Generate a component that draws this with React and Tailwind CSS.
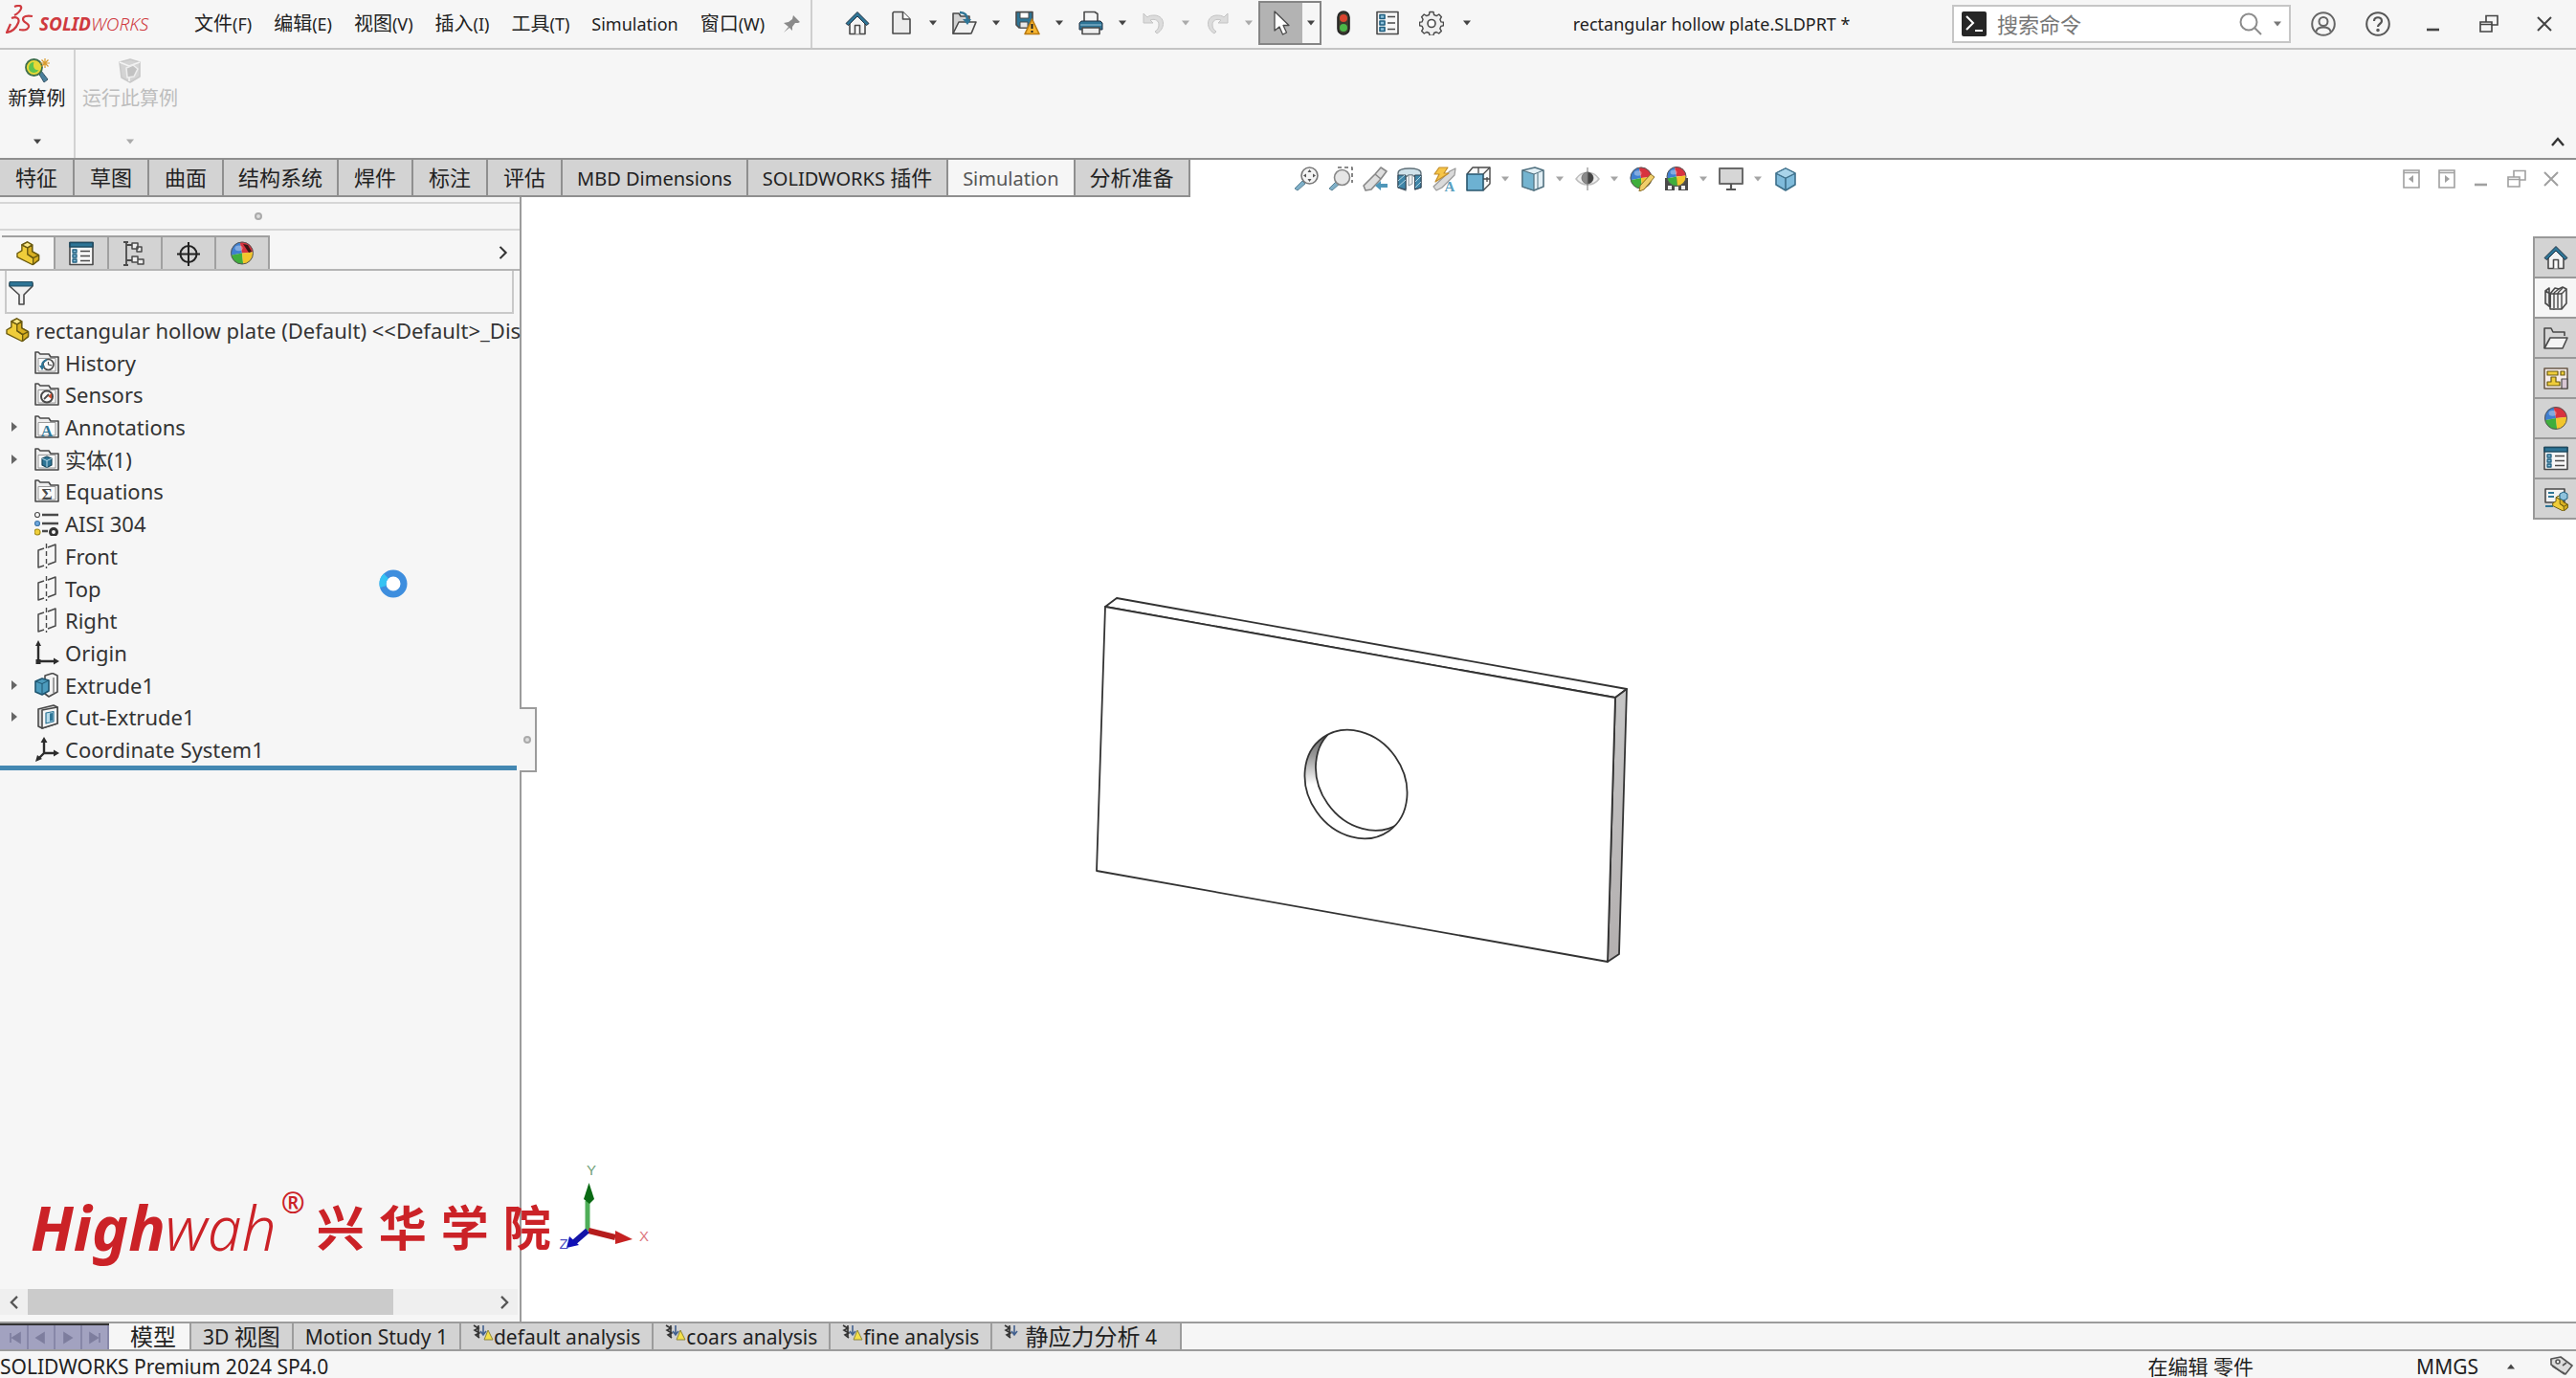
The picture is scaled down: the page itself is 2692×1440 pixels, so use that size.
import React, { useState } from "react";

const MENUS = [
  { zh: "文件", en: "(F)" },
  { zh: "编辑", en: "(E)" },
  { zh: "视图", en: "(V)" },
  { zh: "插入", en: "(I)" },
  { zh: "工具", en: "(T)" },
  { zh: "", en: "Simulation" },
  { zh: "窗口", en: "(W)" },
];

const RIBBON_TABS = [
  { zh: "特征" },
  { zh: "草图" },
  { zh: "曲面" },
  { zh: "结构系统" },
  { zh: "焊件" },
  { zh: "标注" },
  { zh: "评估" },
  { en: "MBD Dimensions" },
  { en: "SOLIDWORKS ", zh: "插件" },
  { en: "Simulation" },
  { zh: "分析准备" },
];

const TREE = [
  { label: "History", icon: "history" },
  { label: "Sensors", icon: "sensors" },
  { label: "Annotations", icon: "annotations", arrow: true },
  { label: "实体(1)", icon: "bodies", arrow: true },
  { label: "Equations", icon: "equations" },
  { label: "AISI 304", icon: "material" },
  { label: "Front", icon: "plane" },
  { label: "Top", icon: "plane" },
  { label: "Right", icon: "plane" },
  { label: "Origin", icon: "origin" },
  { label: "Extrude1", icon: "extrude", arrow: true },
  { label: "Cut-Extrude1", icon: "cut", arrow: true },
  { label: "Coordinate System1", icon: "csys" },
];

const INK = "#4a4a4a";
const BLUE = "#2e7596";

function Svg({ children, className = "h-[26px] w-[26px]" }) {
  return (
    <svg viewBox="0 0 26 26" className={`${className} shrink-0`} fill="none" stroke={INK} strokeWidth="1.6" strokeLinejoin="round" aria-hidden="true">
      {children}
    </svg>
  );
}

function Caret({ className = "text-[#444]" }) {
  return (
    <svg viewBox="0 0 8 6" className={`h-[6px] w-[8px] shrink-0 ${className}`} aria-hidden="true"><path d="M0 .5h8L4 5.5z" fill="currentColor" /></svg>
  );
}

function Ball({ cx = 13, cy = 13, r = 11.5 }) {
  return (
    <g stroke="none">
      <path d={`M${cx} ${cy}L${cx - r * 0.2} ${cy - r}A${r} ${r} 0 0 0 ${cx - r} ${cy + r * 0.2}z`} fill="#3f7fd0" />
      <path d={`M${cx} ${cy}L${cx - r * 0.2} ${cy - r}A${r} ${r} 0 0 1 ${cx + r} ${cy - r * 0.1}z`} fill="#d8333f" />
      <path d={`M${cx} ${cy}L${cx - r} ${cy + r * 0.2}A${r} ${r} 0 0 0 ${cx + r * 0.1} ${cy + r}z`} fill="#3fae3c" />
      <path d={`M${cx} ${cy}L${cx + r} ${cy - r * 0.1}A${r} ${r} 0 0 1 ${cx + r * 0.1} ${cy + r}z`} fill="#f2c62c" />
      <circle cx={cx} cy={cy} r={r} stroke="#555" strokeWidth="1" fill="none" />
      <ellipse cx={cx - r * 0.3} cy={cy - r * 0.45} rx={r * 0.35} ry={r * 0.25} fill="#fff" opacity=".35" />
    </g>
  );
}

function Part({ x = 0, y = 0, s = 1 }) {
  return (
    <g transform={`translate(${x} ${y}) scale(${s})`} stroke="#6a5a10" strokeWidth="1.4">
      <path d="M1 13l5-3V4l6-3 5 3v7l7 4v5l-7 5L1 17z" fill="#f0cd3a" />
      <path d="M6 4l6 3v7l6 4v7l6-5v-5l-7-4V4l-5 3" fill="#d9b021" />
      <path d="M6 4l6 3 5-3-5-3z" fill="#fbe88a" />
      <path d="M12 14l6 4 6-3" />
    </g>
  );
}

const Home = () => (
  <Svg>
    <path d="M5 12v12.500h16V12l-8-8z" fill="#f4f4f4" />
    <path d="M10.500 24.500v-9h5v9" fill="#fff" />
    <path d="M1 13.500L13 1.500l12 12-2.500 2L13 6 3.500 15.500z" fill={BLUE} stroke="#234" strokeWidth="1" />
  </Svg>
);
const NewDoc = () => (
  <Svg>
    <path d="M5 1.500h9.500L22 9v15H4V2.500z" fill="#ececec" />
    <path d="M14.500 1.500V9H22" fill="#fff" />
  </Svg>
);
const OpenDoc = () => (
  <Svg>
    <path d="M1 24V3h6l2 3h9v18z" fill="#d2d2d2" />
    <path d="M1 24l6-12h18l-5 12z" fill="#f1f1f1" />
    <path d="M8 2c6 0 8 3 8 9" stroke={BLUE} strokeWidth="2.600" />
    <path d="M11 9h9l-4 6z" fill={BLUE} stroke="none" />
  </Svg>
);
const SaveWarn = () => (
  <Svg>
    <path d="M1 1.500h17V18H4l-3-3z" fill={BLUE} />
    <path d="M5 2h9v6H5z" fill="#fff" strokeWidth="1" />
    <path d="M5 12h8v6H5z" fill="#e8e8e8" strokeWidth="1" />
    <path d="M17.500 9L25 24.500H10z" fill="#f7b52f" stroke="#b87a12" />
    <path d="M17.500 14v5M17.500 21v2" stroke="#222" strokeWidth="2" />
  </Svg>
);
const Print = () => (
  <Svg>
    <path d="M6 12V1.500h11l3 2V12z" fill="#f5f5f5" />
    <path d="M1 13l2-2h20l2 2v7H1z" fill={BLUE} stroke="#234" strokeWidth="1" />
    <path d="M4 18h18v6.500H4z" fill="#eee" />
    <path d="M2 15h22" stroke="#9cc6da" strokeWidth="1" />
  </Svg>
);
const Undo = () => (
  <Svg>
    <path d="M2 3v10h10L9 10c6-2 9 1 9 5 0 3-1 5-4 7l2 2c9-5 9-18-2-19-3 0-6 0-8 2z" fill="#dcdcdc" stroke="#c4c4c4" strokeWidth="1" />
  </Svg>
);
const Redo = () => (
  <Svg>
    <path d="M24 3v10H14l3-3c-6-2-9 1-9 5 0 3 1 5 4 7l-2 2C1 19 1 6 12 5c3 0 6 0 8 2z" fill="#dcdcdc" stroke="#c4c4c4" strokeWidth="1" />
  </Svg>
);
const Pointer = () => (
  <Svg>
    <path d="M6 1v20l5-4 3.500 8 4-2-3.500-7.500h6z" fill="#fff" strokeWidth="1.300" />
  </Svg>
);
const Traffic = () => (
  <Svg>
    <rect x="7" y="1" width="12" height="24" rx="6" fill="#3b3b2e" stroke="#222" />
    <circle cx="13" cy="8" r="4" fill="#d9442f" stroke="none" />
    <circle cx="13" cy="18" r="4" fill="#4cb648" stroke="none" />
  </Svg>
);
const OptionList = () => (
  <Svg>
    <path d="M2 1.500h22v23H2z" fill="#f6f6f6" />
    <path d="M5 4.500h5v4H5zM5 11h5v4H5zM5 17.500h5v4H5z" fill="#8ec2dc" stroke="#1e5f80" />
    <path d="M13 6.500h8M13 13h8M13 19.500h8" />
  </Svg>
);
const Gear = () => (
  <Svg>
    <path d="M11 1.500h4l.6 3 2.600 1.100L20.800 4l2.600 2.700-1.500 2.600 1.100 2.600 2.500.3v3.600l-2.700.6-1 2.500 1.500 2.500-2.600 2.600-2.600-1.500-2.500 1-.6 2.600h-4l-.6-2.600-2.500-1-2.600 1.500-2.600-2.600 1.500-2.500-1-2.500-2.700-.6v-3.600l2.500-.3 1.100-2.600-1.500-2.600L5.200 4l2.600 1.600 2.600-1.100z" fill="#f0f0f0" strokeWidth="1.400" />
    <circle cx="13" cy="13.500" r="4" fill="#fff" />
  </Svg>
);
const PropList = () => (
  <Svg>
    <path d="M1 1.500h24v23H1z" fill="#f7f7f7" />
    <path d="M1 1.500h24v4.500H1z" fill={BLUE} stroke="#1e4c63" />
    <path d="M4 9h4v3H4zM4 14h4v3H4zM4 19h4v3H4z" fill="#8ec2dc" stroke="#1e5f80" strokeWidth="1.300" />
    <path d="M12 10.500h10M12 15.500h10M12 20.500h10" />
  </Svg>
);

/* feature tree icons */
function Folder({ children }) {
  return (
    <Svg>
      <path d="M1 24V2h3l2 2h9l2 3h8v17z" fill="#ededed" />
      <path d="M4 8.500h18V22H4z" fill="#fafafa" stroke="#9a9a9a" strokeWidth="1" />
      {children}
    </Svg>
  );
}

const TREE_ICONS = {
  history: (
    <Folder>
      <circle cx="14.500" cy="15" r="5.500" />
      <path d="M14.500 12v3l4 1" strokeWidth="1.200" />
      <path d="M5 16h6l-3 5z" fill={BLUE} stroke="none" />
      <path d="M8 16c0-3 2-5 5-6" stroke={BLUE} strokeWidth="2" />
    </Folder>
  ),
  sensors: (
    <Folder>
      <circle cx="13" cy="15.500" r="6" strokeWidth="2" />
      <path d="M14 15l4-3v6z" fill="#d2502f" stroke="none" />
      <path d="M10 18l5-5" strokeWidth="1.800" />
    </Folder>
  ),
  annotations: (
    <Folder>
      <text x="13" y="22.500" textAnchor="middle" fontSize="17" fontWeight="700" fontFamily="Liberation Serif, serif" fill={BLUE} stroke="none">A</text>
    </Folder>
  ),
  bodies: (
    <Folder>
      <path d="M8 12l5-2 5 2v7l-5 2.500L8 19z" fill={BLUE} stroke="#17465c" strokeWidth="1.200" />
      <path d="M8 12l5 2.500 5-2.500M13 14.500v7" stroke="#b9dcea" strokeWidth="1" />
    </Folder>
  ),
  equations: (
    <Folder>
      <text x="13" y="22" textAnchor="middle" fontSize="17" fontWeight="700" fontFamily="Liberation Serif, serif" fill={INK} stroke="none">Σ</text>
    </Folder>
  ),
  material: (
    <Svg>
      <circle cx="3" cy="4" r="2.500" fill="#fff" strokeWidth="1.200" />
      <circle cx="3" cy="13" r="2.500" fill="#6fa9e0" stroke="#3f76a8" strokeWidth="1.200" />
      <circle cx="3" cy="22" r="3" fill="#f0cf3a" stroke="#a08a1a" strokeWidth="1.200" />
      <path d="M8 4h17M8 13h17M8 21h6" strokeWidth="2.400" />
      <circle cx="20" cy="22" r="3.500" strokeWidth="3" stroke="#333" />
    </Svg>
  ),
  plane: (
    <Svg>
      <path d="M10 5L4 7v18l6-2M14 4l8-3v18l-8 3" strokeWidth="1.500" />
      <path d="M12.500 0v26" strokeDasharray="5 3" strokeWidth="1.400" />
    </Svg>
  ),
  origin: (
    <Svg>
      <path d="M4 4v18h17" stroke="#2c2c2c" strokeWidth="2.400" />
      <path d="M1 6l3-6 3 6zM20 18.500l6 3.500-6 3.500zM1.500 20h5v5h-5z" fill="#2c2c2c" stroke="none" />
    </Svg>
  ),
  extrude: (
    <Svg>
      <path d="M11 3l8-2.500 5 2.500v17l-9 5-4-3z" fill="#f2f2f2" />
      <path d="M20 5v16" strokeWidth="1" />
      <path d="M1 9l7-3 7 2v11l-7 4-7-3z" fill="#4c9bbd" stroke="#1e5570" />
      <path d="M1 9l7 2.500L15 8M8 11.500V23" stroke="#1e5570" strokeWidth="1" />
    </Svg>
  ),
  cut: (
    <Svg>
      <path d="M4 5l16-4 4 2v17l-16 5-4-2z" fill="#d8d8d8" />
      <path d="M8 6l16-3v17L8 25z" fill="#f6f6f6" />
      <path d="M12 9l8-1.500V18l-8 2z" fill="#b9dcea" stroke={BLUE} strokeWidth="1.200" />
      <path d="M16 9.500l3-.6v8l-3 .8z" fill={BLUE} stroke="none" />
    </Svg>
  ),
  csys: (
    <Svg>
      <path d="M10 4v13h12M10 17l-6 6" stroke="#2c2c2c" strokeWidth="2.400" />
      <path d="M6.500 6L10 0l3.500 6zM20 13.500l6 3.500-6 3.500zM1 26l2-7 5 4z" fill="#2c2c2c" stroke="none" />
    </Svg>
  ),
};

/* heads-up view toolbar icons */
const Glass = () => (
  <g>
    <path d="M1 23l8-8 3 3-8 7z" fill="#7fb0c8" stroke="#5a8296" strokeWidth="1" />
  </g>
);
const ZoomFit = () => (
  <Svg>
    <Glass />
    <circle cx="16.500" cy="9.500" r="8.500" fill="#f4f4f4" stroke="#777" />
    <path d="M16.500 3l2 3h-4zM16.500 16l2-3h-4zM10 9.500l3-2v4zM23 9.500l-3-2v4z" fill="#555" stroke="none" />
  </Svg>
);
const ZoomArea = () => (
  <Svg>
    <path d="M10 1h15v16" stroke="#666" strokeDasharray="4 3" />
    <Glass />
    <circle cx="14.500" cy="11.500" r="8" fill="#e6e6e6" stroke="#888" />
  </Svg>
);
const PrevView = () => (
  <Svg>
    <path d="M1 20l12-12 6-7 6 4-6 8-10 11-6 1z" fill="#dedede" stroke="#888" />
    <path d="M13 8l6 5" stroke="#888" />
    <path d="M13 20l6-5v3h7v4h-7v3z" fill="#4f97b9" stroke="none" />
  </Svg>
);
const Section = () => (
  <Svg>
    <path d="M1 7c0-4 5-5 12-5s12 1 12 5v15l-6 2V11l-3-2h-4l-3 2v14l-8-3z" fill="#d0e2ea" stroke="#5f6f78" strokeWidth="1.300" />
    <path d="M12 9h4v9l-4 2z" fill="#eee" stroke="#8a979e" strokeWidth="1" />
    <path d="M1 9h8v15l-8-2zM18.500 9H25v13l-6.500 2z" fill="#3f86a8" stroke="#345" strokeWidth="1" />
    <path d="M1 15l7-6M1 21l8-7M19 16l6-6M19 22l6-6" stroke="#b5d6e4" strokeWidth="1" />
  </Svg>
);
const Dynamic = () => (
  <Svg>
    <path d="M2 21L19 5l6-3-1 7-13 13-6 3z" fill="#dadada" stroke="#999" strokeWidth="1.200" />
    <path d="M8 1h9l-4 6h5L4 16l4-8H3z" fill="#f6c546" stroke="#c38e2b" strokeWidth="1.200" />
    <text x="19" y="25.500" textAnchor="middle" fontSize="15" fontWeight="700" fontFamily="Liberation Serif, serif" fill="#5aa0c0" stroke="none">A</text>
  </Svg>
);
const Orientation = () => (
  <Svg>
    <path d="M1 8l6-7h18v17l-7 7" fill="#fafafa" strokeWidth="1.400" />
    <path d="M1 8h17v17H1z" fill="#6db1d2" stroke="#28566d" />
    <path d="M18 8l7-7M13 1v6M18 13h7M22 11v5" strokeWidth="1.300" />
  </Svg>
);
const DisplayStyle = () => (
  <Svg>
    <path d="M2 4l13-3 9 3v17l-10 4-12-4z" fill="#e3f0f6" stroke="#50707f" />
    <path d="M2 4l12 4v17L2 21z" fill="#74b4d0" stroke="#50707f" strokeWidth="1.200" />
    <path d="M14 8l10-4M18 7v17" stroke="#50707f" strokeWidth="1" />
  </Svg>
);
const Eye = () => (
  <Svg>
    <path d="M1 13c6-9 18-9 24 0-6 8-18 8-24 0z" fill="#f0f0f0" stroke="#bdbdbd" />
    <circle cx="13" cy="12" r="6" fill="#8a8a8a" stroke="#777" strokeWidth="1" />
    <path d="M13 6a6 6 0 0 1 0 12z" fill="#444" stroke="none" />
    <path d="M13 1v24" stroke="#777" strokeWidth="1" />
  </Svg>
);
const Appearance = () => (
  <Svg>
    <Ball cx={12} cy={12} r={11} />
    <path d="M11 20L22 8l4 3-11 13-5 2z" fill="#f1cf6a" stroke="#8a6d25" strokeWidth="1" />
  </Svg>
);
const Scene = () => (
  <Svg>
    <path d="M1 12h24v13H1z" fill="#4a4a4a" stroke="none" />
    <path d="M4 20h4v4H4zM11 21h4v4h-4zM18 20h4v4h-4z" fill="#eee" stroke="none" />
    <Ball cx={13} cy={10.5} r={10} />
  </Svg>
);
const Monitor = () => (
  <Svg>
    <path d="M1 2h24v16H1z" fill="#d6d6d6" stroke="#6a6a6a" strokeWidth="2" />
    <path d="M13 18v5M8 24h10" stroke="#555" strokeWidth="2.200" />
  </Svg>
);
const BlueCube = () => (
  <Svg>
    <path d="M3 7l10-5 10 5v12l-10 6L3 19z" fill="#7fbbdb" stroke="#3c6f8a" />
    <path d="M3 7l10 5 10-5M13 12v13" stroke="#3c6f8a" />
    <path d="M3 7l10-5 10 5-10 5z" fill="#a9d4ea" stroke="#3c6f8a" strokeWidth="1" />
  </Svg>
);

const HUD = [
  ["整屏显示全图", ZoomFit], ["局部放大", ZoomArea], ["上一视图", PrevView], ["剖面视图", Section],
  ["动态注解视图", Dynamic], ["视图定向", Orientation, true], ["显示样式", DisplayStyle, true],
  ["隐藏所有类型", Eye, true], ["编辑外观", Appearance], ["应用布景", Scene, true],
  ["视图设定", Monitor, true], ["3D", BlueCube],
];

const Books = () => (
  <Svg>
    <path d="M2 6l4-3v16l5 6-9-6zM2 6l5 3v14l-5-4z" fill="#e4e4e4" />
    <path d="M7 9l5-6 4 1 4-2 4 2v15l-5 6H7z" fill="#f2f2f2" />
    <path d="M7 9v14M11 8v16M15 8v16M19 8v17M7 9h12l5-5M11 8l5-4M15 8l5-5" strokeWidth="1.400" />
  </Svg>
);
const OpenFolder = () => (
  <Svg>
    <path d="M1 24V3h7l2 4h12v4" fill="#d6d6d6" />
    <path d="M1 24l6-11h18l-5 11z" fill="#f4f4f4" />
  </Svg>
);
const Palette = () => (
  <Svg>
    <path d="M1 3h24v21H1z" fill="#f6ecea" stroke="#6b5a4a" />
    <path d="M4 6h11v4H4zM18 6h4v4h-4zM8 12h5v5h4v4H4v-4h4z" fill="#f0cd3a" stroke="#6a5a10" strokeWidth="1.200" />
    <path d="M19 14h6v10h-6z" fill="#d9c7d4" strokeWidth="1.200" />
  </Svg>
);
const BallIcon = () => <Svg><Ball /></Svg>;
const Forum = () => (
  <Svg>
    <path d="M2 3h20v14H2z" fill="#f3f3f3" />
    <path d="M5 7h6M5 11h6M2 21h8" stroke={BLUE} strokeWidth="2" />
    <Part x={9} y={9} s={0.68} />
    <path d="M17 8l4-2 4 2v5l-4 2-4-2z" fill="#8ec2dc" stroke="#1e5f80" strokeWidth="1" />
  </Svg>
);
const TASKS = [["主页", Home], ["设计库", Books], ["文件探索器", OpenFolder], ["视图调色板", Palette], ["外观", BallIcon], ["自定义属性", PropList], ["论坛", Forum]];

const ConfigTree = () => (
  <Svg>
    <path d="M4 1v24M4 4h6M4 20h6M1 1h5M1 25h5" strokeWidth="1.800" />
    <path d="M10 2h6v6h-6zM15 6h5v5h-5zM10 16h6v6h-6zM16 19h6v5h-6z" fill="#eee" strokeWidth="1.500" />
  </Svg>
);
const Target = () => (
  <Svg>
    <circle cx="13" cy="13.500" r="8.500" stroke="#222" strokeWidth="2" />
    <path d="M13 1v25M1 13.500h24" stroke="#222" strokeWidth="2" />
  </Svg>
);
const DisplayBall = () => (
  <Svg>
    <Ball cy={12.5} />
    <path d="M14 3l5 1 4 7-3 1z" fill="#3a1616" stroke="none" />
  </Svg>
);
const PANEL_TABS = [
  ["FeatureManager", () => <Svg><Part x={1} y={0} s={0.98} /></Svg>],
  ["PropertyManager", PropList],
  ["ConfigurationManager", ConfigTree],
  ["DimXpertManager", Target],
  ["DisplayManager", DisplayBall],
];

const QUICK = [["新建", NewDoc], ["打开", OpenDoc], ["保存", SaveWarn], ["打印", Print], ["撤消", Undo, true], ["重做", Redo, true]];

function RestoreIcon({ className = "h-[20px] w-[20px]" }) {
  return (
    <svg viewBox="0 0 20 20" className={className} fill="none" stroke="currentColor" strokeWidth="1.600" aria-hidden="true">
      <path d="M1 8h12v10H1zM7 8V1.500h12V11h-6M1 10.500h12" />
    </svg>
  );
}
function CloseIcon({ className = "h-[16px] w-[16px]" }) {
  return (
    <svg viewBox="0 0 16 16" className={className} stroke="currentColor" strokeWidth="2" aria-hidden="true"><path d="M1 1l14 14M15 1L1 15" /></svg>
  );
}
function MinIcon({ className = "h-[16px] w-[16px]" }) {
  return (
    <svg viewBox="0 0 16 16" className={className} stroke="currentColor" strokeWidth="2.600" aria-hidden="true"><path d="M1 14h13" /></svg>
  );
}

function TitleBar() {
  return (
    <header className="flex h-[52px] items-center border-b-2 border-[#c4c4c4] bg-[#f6f6f6]">
      <div className="flex w-[203px] items-center gap-[6px] pl-[5px] text-[#cf3a3f]">
        <svg viewBox="0 0 30 30" className="mb-[10px] h-[30px] w-[30px]" fill="none" stroke="currentColor" strokeWidth="2.200" strokeLinejoin="round" aria-hidden="true">
          <path d="M10 2c5-2 8-1 7 2-1 3-3 5-7 7" />
          <path d="M7 14c5-2 9 0 7 5-2 5-6 9-12 10l4-9" />
          <path d="M29 12c-6-1-10 0-10 3 0 4 7 4 6 8-1 3-5 4-10 3" />
        </svg>
        <span className="text-[19px] leading-[24px] italic">
          <b className="font-bold">SOLID</b><span className="font-light">WORKS</span>
        </span>
      </div>
      <nav className="flex items-center gap-[23px] text-[18px] text-[#222]">
        {MENUS.map((m) => (
          <button key={m.en} className="whitespace-nowrap leading-[28px]"><span className="text-[20px]">{m.zh}</span>{m.en}</button>
        ))}
      </nav>
      <button aria-label="固定" className="ml-[18px] flex w-[30px] shrink-0 justify-start">
        <svg viewBox="0 0 20 20" className="h-[20px] w-[20px]" fill="#8a8a8a" aria-hidden="true"><path d="M12 1l7 7-2 1-3 0-3 4 0 4-3-3-6 5 5-6-5-4 5-1 4-3z" /></svg>
      </button>
      <div className="flex h-full items-center border-l-2 border-[#cfcfcf] pb-[3px] pl-[30px]">
        <button aria-label="主页" className="flex w-[34px] justify-center"><Home /></button>
        <div className="ml-[12px] flex items-center gap-[6px]">
          {QUICK.map(([name, Icon, off]) => (
            <div key={name} className="flex items-center gap-[6px]">
              <button aria-label={name} disabled={off} className="flex w-[34px] justify-center"><Icon /></button>
              <button aria-label={`${name} 选项`} disabled={off} className="flex w-[20px] justify-center"><Caret className={off ? "text-[#aaa]" : "text-[#444]"} /></button>
            </div>
          ))}
        </div>
        <div className="flex h-[46px] items-center border-2 border-[#858585]">
          <button aria-label="选择" className="flex h-full w-[44px] items-center justify-center bg-[#b3b3b3]"><Pointer /></button>
          <button aria-label="选择 选项" className="flex w-[18px] justify-center"><Caret /></button>
        </div>
        <div className="ml-[10px] flex items-center gap-[20px]">
          <button aria-label="重建模型"><Traffic /></button>
          <button aria-label="文件属性"><OptionList /></button>
          <button aria-label="选项"><Gear /></button>
          <button aria-label="选项 菜单"><Caret /></button>
        </div>
      </div>
      <h1 className="flex-1 text-center text-[18px] whitespace-nowrap text-[#222]">rectangular hollow plate.SLDPRT *</h1>
      <label className="flex h-[40px] w-[354px] items-center border-2 border-[#c6c6c6] bg-white pr-[8px] pl-[8px]">
        <svg viewBox="0 0 26 26" className="h-[26px] w-[26px] shrink-0" aria-hidden="true">
          <rect width="26" height="26" rx="2" fill="#262626" />
          <path d="M5 5l7 7-7 7M14 20h8" fill="none" stroke="#fff" strokeWidth="2" />
        </svg>
        <input aria-label="搜索命令" placeholder="搜索命令" className="ml-[11px] min-w-0 flex-1 bg-transparent text-[22px] leading-[30px] outline-none placeholder:text-[#777]" />
        <svg viewBox="0 0 24 24" className="mr-[12px] h-[24px] w-[24px] shrink-0" fill="none" stroke="#8c8c8c" strokeWidth="2" aria-hidden="true"><circle cx="10" cy="10" r="8.500" /><path d="M16 16l7 7" /></svg>
        <Caret className="text-[#777]" />
      </label>
      <div className="flex items-center pr-[5px] pl-[5px] text-[#444]">
        <button aria-label="登录" className="flex w-[57px] justify-center">
          <svg viewBox="0 0 26 26" className="h-[26px] w-[26px]" fill="none" stroke="#666" strokeWidth="2" aria-hidden="true"><circle cx="13" cy="13" r="11.800" /><circle cx="13" cy="10.500" r="4.500" /><path d="M5.500 21c1-6 14-6 15 0" /></svg>
        </button>
        <button aria-label="帮助" className="flex w-[58px] justify-center">
          <svg viewBox="0 0 26 26" className="h-[26px] w-[26px]" fill="none" stroke="#555" strokeWidth="2" aria-hidden="true"><circle cx="13" cy="13" r="11.800" /><path d="M9 10c0-5 8-5 8 0 0 3-4 3-4 6" strokeWidth="2.200" /><circle cx="13" cy="19.500" r=".8" /></svg>
        </button>
        <button aria-label="最小化" className="flex w-[58px] justify-center"><MinIcon /></button>
        <button aria-label="还原" className="flex w-[58px] justify-center"><RestoreIcon /></button>
        <button aria-label="关闭" className="flex w-[57px] justify-center"><CloseIcon /></button>
      </div>
    </header>
  );
}

function Ribbon() {
  return (
    <section className="flex h-[113px] items-stretch bg-[#f6f6f6]">
      <button className="flex w-[79px] flex-col items-center border-r-2 border-[#d2d2d2] pt-[9px]">
        <Svg>
          <path d="M14 15l3-2 7 9-4 3z" fill="#4a7f9c" stroke="#39586a" strokeWidth="1" />
          <circle cx="9.500" cy="9.500" r="8.500" fill="#e5d838" stroke="#3f6f4b" strokeWidth="1.800" />
          <path d="M9.500 4a5.500 5.500 0 1 0 5 8c-3 1-7-2-5-8z" fill="#5fc34d" stroke="none" />
          <path d="M21 0v10M16 5h10M17.500 1.500l7 7M24.500 1.500l-7 7" stroke="#d99a2b" strokeWidth="1.200" />
        </Svg>
        <span className="mt-[2px] text-[20px] leading-[28px] text-[#222]">新算例</span>
        <span className="mt-[28px]"><Caret /></span>
      </button>
      <button disabled className="flex w-[114px] flex-col items-center pt-[9px]">
        <Svg>
          <path d="M2 4l11-3 10 3v15l-10 6-9-5z" fill="#d4d4d4" stroke="#c9c9c9" />
          <path d="M2 4l10 4 11-4M12 8v16" stroke="#f4f4f4" />
          <path d="M9 10l7-3 5 4-4 8-7 1z" fill="#c2c2c2" stroke="#eee" />
        </Svg>
        <span className="mt-[2px] text-[20px] leading-[28px] text-[#bdbdbd]">运行此算例</span>
        <span className="mt-[28px]"><Caret className="text-[#aaa]" /></span>
      </button>
      <button aria-label="折叠" className="mr-[12px] mb-[12px] ml-auto self-end">
        <svg viewBox="0 0 14 10" className="h-[10px] w-[14px]" fill="none" stroke="#333" strokeWidth="2.400" aria-hidden="true"><path d="M1 9l6-7 6 7" /></svg>
      </button>
    </section>
  );
}

function TabRow() {
  const [active, setActive] = useState(9);
  return (
    <div className="flex h-[41px] items-center border-t-2 border-[#8f8f8f] bg-white">
      <div role="tablist" className="flex h-full border-b-2 border-[#8f8f8f]">
        {RIBBON_TABS.map((t, i) => (
          <button
            key={i}
            role="tab"
            aria-selected={i === active}
            onClick={() => setActive(i)}
            className={`min-w-[78px] border-r-2 border-[#8f8f8f] px-[15px] text-[20px] leading-[36px] whitespace-nowrap ${i === active ? "bg-[#f6f6f6] text-[#555]" : "bg-[#d3d3d3] text-[#222]"}`}
          >
            {t.en}<span className="text-[22px]">{t.zh}</span>
          </button>
        ))}
      </div>
      <div className="ml-[108px] flex items-center gap-[10px]">
        {HUD.map(([name, Icon, menu]) => (
          <React.Fragment key={name}>
            <button aria-label={name}><Icon /></button>
            {menu && <button aria-label={`${name} 选项`} className="flex w-[11px] justify-center"><Caret className="text-[#a5a5a5]" /></button>}
          </React.Fragment>
        ))}
      </div>
      <div className="mr-[8px] ml-auto flex items-center text-[#a0a0a0]">
        {["M11 6l-5 4 5 4z", "M7 6l5 4-5 4z"].map((d) => (
          <button key={d} aria-label="面板" className="flex w-[37px] justify-center">
            <svg viewBox="0 0 18 20" className="h-[20px] w-[18px]" fill="none" stroke="currentColor" strokeWidth="1.600" aria-hidden="true"><path d="M1 1h16v18H1zM1 3.500h16" /><path d={d} fill="currentColor" stroke="none" /></svg>
          </button>
        ))}
        <button aria-label="最小化文档" className="flex w-[36px] justify-center"><MinIcon /></button>
        <button aria-label="还原文档" className="flex w-[37px] justify-center"><RestoreIcon /></button>
        <button aria-label="关闭文档" className="flex w-[36px] justify-center"><CloseIcon /></button>
      </div>
    </div>
  );
}

function FeaturePanel() {
  return (
    <aside className="relative z-10 flex w-[545px] shrink-0 flex-col border-r-2 border-[#9c9c9c] bg-[#f6f6f6]">
      <div className="mt-[5px] flex h-[30px] items-center justify-center border-y-2 border-[#d6d6d6] pr-[4px]">
        <span className="h-[8px] w-[8px] rounded-full border-2 border-[#aaa] bg-[#ddd]" />
      </div>
      <div className="mt-[5px] flex h-[37px] items-stretch border-b-2 border-[#b5b5b5] pl-[2px]">
        {PANEL_TABS.map(([name, Icon], i) => (
          <button key={name} aria-label={name} className={`flex w-[56px] items-center justify-center border-t-2 border-r-2 border-[#a0a0a0] ${i === 0 ? "bg-[#f6f6f6]" : "bg-[#d3d3d3]"}`}>
            <Icon />
          </button>
        ))}
        <button aria-label="展开" className="mr-[12px] ml-auto">
          <svg viewBox="0 0 10 16" className="h-[14px] w-[10px]" fill="none" stroke="#333" strokeWidth="2.400" aria-hidden="true"><path d="M1 1l7 7-7 7" /></svg>
        </button>
      </div>
      <label className="mr-[6px] ml-[5px] flex h-[45px] items-center border-2 border-t-0 border-[#c9c9c9] pt-[2px] pl-[2px]">
        <Svg>
          <path d="M1 3h24v3l-9 9v10h-5V15L1 6z" fill="#f0f0f0" />
          <path d="M1 1.500h24V6H1z" fill={BLUE} stroke="#1e4c63" strokeWidth="1" />
        </Svg>
        <input aria-label="过滤" className="min-w-0 flex-1 bg-transparent text-[22px] outline-none" />
      </label>
      <ul className="grid h-[472px] auto-rows-fr text-[22px] leading-[30px] text-[#333]">
        <li className="flex items-center gap-[6px] pl-[5px] whitespace-nowrap">
          <Svg><Part x={1} y={0} s={0.98} /></Svg>
          rectangular hollow plate (Default) &lt;&lt;Default&gt;_Dis
        </li>
        {TREE.map((n) => (
          <li key={n.label} className="flex items-center whitespace-nowrap">
            <span className="flex w-[36px] shrink-0 justify-center pr-[6px]">
              {n.arrow && <svg viewBox="0 0 6 10" className="h-[10px] w-[6px]" aria-hidden="true"><path d="M0 0l6 5-6 5z" fill="#666" /></svg>}
            </span>
            {TREE_ICONS[n.icon]}
            <span className="ml-[6px]">{n.label}</span>
          </li>
        ))}
      </ul>
      <div className="mr-[3px] h-[5px] bg-[#4488b2]" />
      {/* busy cursor over the tree */}
      <svg viewBox="0 0 30 30" className="absolute top-[389px] left-[396px] h-[30px] w-[30px]" fill="none" strokeWidth="7" aria-hidden="true">
        <circle cx="15" cy="15" r="11" stroke="#3e8ede" fill="#fff" />
        <path d="M4.500 18a11 11 0 0 1 3-11" stroke="#35c3f3" />
      </svg>
      {/* splitter grip */}
      <div className="absolute top-[533px] -right-[18px] flex h-[68px] w-[18px] items-center justify-center border-2 border-l-0 border-[#9c9c9c] bg-[#f6f6f6]">
        <span className="h-[8px] w-[8px] rounded-full border-2 border-[#aaa] bg-[#ddd]" />
      </div>
      <div className="mt-auto mr-[2px] mb-[7px] flex h-[27px] items-center bg-[#efefef]">
        <button aria-label="向左" className="flex w-[29px] justify-center">
          <svg viewBox="0 0 10 16" className="h-[14px] w-[9px]" fill="none" stroke="#555" strokeWidth="2.600" aria-hidden="true"><path d="M9 1L2 8l7 7" /></svg>
        </button>
        <div className="flex h-full flex-1"><div className="h-full w-[79%] bg-[#cbcbcb]" /></div>
        <button aria-label="向右" className="flex w-[28px] justify-center">
          <svg viewBox="0 0 10 16" className="h-[14px] w-[9px]" fill="none" stroke="#555" strokeWidth="2.600" aria-hidden="true"><path d="M1 1l7 7-7 7" /></svg>
        </button>
      </div>
    </aside>
  );
}

function Plate() {
  return (
    <svg viewBox="1140 620 570 392" className="absolute top-[414px] left-[595px] h-[392px] w-[570px]" fill="none" stroke="#333" strokeWidth="1.800" strokeLinejoin="round" aria-label="rectangular hollow plate">
      <defs>
        <linearGradient id="wall" x1="0" y1="0" x2="0" y2="1">
          <stop offset="0" stopColor="#555" />
          <stop offset=".25" stopColor="#999" />
          <stop offset=".5" stopColor="#fff" />
        </linearGradient>
        <linearGradient id="side" x1="0" y1="0" x2="0" y2="1">
          <stop offset="0" stopColor="#c6c6c6" />
          <stop offset="1" stopColor="#b3afaf" />
        </linearGradient>
        <clipPath id="hole"><ellipse cx="1417" cy="819.500" rx="59.700" ry="50.200" transform="rotate(55 1417 819.500)" /></clipPath>
      </defs>
      <path d="M1155 634L1167 625L1700 720L1688 729z" fill="#fff" />
      <path d="M1688 729L1700 720L1692 997L1680 1005z" fill="url(#side)" />
      <path d="M1155 634L1688 729L1680 1005L1146 910z" fill="#fff" />
      <g clipPath="url(#hole)">
        <rect x="1360" y="760" width="114" height="120" fill="url(#wall)" stroke="none" />
        <ellipse cx="1428.500" cy="811" rx="59.700" ry="50.200" transform="rotate(55 1428.500 811)" fill="#fff" />
      </g>
      <ellipse cx="1417" cy="819.500" rx="59.700" ry="50.200" transform="rotate(55 1417 819.500)" />
    </svg>
  );
}

function Triad() {
  return (
    <svg viewBox="0 0 104 104" className="absolute bottom-[67px] left-[36px] h-[104px] w-[104px]" aria-hidden="true">
      <path d="M33 76V45" stroke="#4fae58" strokeWidth="5" />
      <path d="M29 43l5.500-17L40 43l-5 5z" fill="#0a6a14" />
      <path d="M34 76l28 7" stroke="#b51d1d" strokeWidth="6" />
      <path d="M62 76l18 9-18 5z" fill="#c62222" />
      <path d="M33 76L18 89" stroke="#1414a8" strokeWidth="6" />
      <path d="M14 82l10 9-13 3z" fill="#1010b8" />
      <g fontSize="15" textAnchor="middle" fontFamily="Liberation Sans, sans-serif">
        <text x="37" y="18" fill="#6f9f78">Y</text>
        <text x="92" y="87" fill="#dd7880">X</text>
        <text x="8" y="95" fill="#4b4bc0">Z</text>
      </g>
    </svg>
  );
}

function Watermark() {
  return (
    <div className="absolute bottom-[54px] left-[32px] z-20 flex items-center text-[#cb2227]">
      <span className="text-[64px] leading-[88px] italic whitespace-nowrap">
        <b className="font-bold">High</b><span className="font-light">wah</span>
      </span>
      <span className="ml-[5px] self-start text-[30px] leading-[36px] font-semibold">®</span>
      <span className="ml-[12px] flex gap-[15px] text-[50px] leading-[84px] font-bold">
        {["兴", "华", "学", "院"].map((c) => <span key={c}>{c}</span>)}
      </span>
    </div>
  );
}

function StudyIcon({ warn }) {
  return (
    <svg viewBox="0 0 22 20" className="h-[20px] w-[22px] shrink-0 self-start" fill="none" aria-hidden="true">
      <path d="M1 2l5 3-4 2 5 3-4 2 4 3M6 2v12" stroke="#333" strokeWidth="1.600" />
      <path d="M11 2v9M8 8l3 4 3-4" stroke="#41608f" strokeWidth="1.600" />
      {warn && <path d="M16 7l5 10h-9z" fill="#f4e04a" stroke="#8f8638" />}
    </svg>
  );
}

function BottomTabs() {
  const tab = "flex items-center justify-center border-r-2 border-[#9c9c9c] bg-[#d3d3d3] whitespace-nowrap";
  return (
    <div className="flex h-[31px] items-stretch border-y-2 border-[#9c9c9c] bg-[#f6f6f6] text-[21px] leading-[26px] text-[#222]">
      <div className="flex border-t-2 border-[#333] bg-[#a2a2c0] pl-[2px]">
        {["M7 2v10M17 2L9 7l8 5z", "M14 2L6 7l8 5z", "M7 2l8 5-8 5z", "M16 2v10M6 2l8 5-8 5z"].map((d) => (
          <button key={d} aria-label="滚动标签" disabled className="flex w-[28px] items-center justify-center border-r-2 border-[#8787a8]">
            <svg viewBox="0 0 22 14" className="h-[14px] w-[22px]" fill="#7e7e9e" stroke="#7e7e9e" strokeWidth="1.600" aria-hidden="true"><path d={d} /></svg>
          </button>
        ))}
      </div>
      <button className="border-r-2 border-[#9c9c9c] bg-[#f6f6f6] pr-[14px] pl-[22px] text-[24px]">模型</button>
      <button className={`${tab} px-[12px]`}>3D&nbsp;<span className="text-[24px]">视图</span></button>
      <button className={`${tab} px-[12px]`}>Motion Study 1</button>
      {["default analysis", "coars analysis", "fine analysis"].map((s) => (
        <button key={s} className={`${tab} px-[12px]`}><StudyIcon warn />{s}</button>
      ))}
      <button className={`${tab} pr-[24px] pl-[12px]`}><StudyIcon /><span className="text-[24px]">静应力分析</span>&nbsp;4</button>
    </div>
  );
}

export default function App() {
  return (
    <div className="flex h-screen flex-col overflow-hidden bg-white font-['Noto_Sans','Noto_Sans_CJK_SC',sans-serif]">
      <TitleBar />
      <Ribbon />
      <TabRow />
      <div className="relative flex min-h-0 flex-1">
        <FeaturePanel />
        <main className="relative flex-1 bg-white">
          <Plate />
          <Triad />
        </main>
        <nav className="mt-[41px] flex flex-col self-start border-t-2 border-l-2 border-[#999]">
          {TASKS.map(([name, Icon], i) => (
            <button key={name} aria-label={name} className={`flex h-[42px] w-[43px] items-center justify-center border-b-2 border-[#999] ${i === 1 ? "bg-[#f6f6f6]" : "bg-[#d3d3d3]"}`}>
              <Icon />
            </button>
          ))}
        </nav>
        <Watermark />
      </div>
      <BottomTabs />
      <footer className="flex h-[28px] items-end bg-[#f6f6f6] text-[21px] leading-[24px] text-[#222]">
        <span>SOLIDWORKS Premium 2024 SP4.0</span>
        <span className="ml-auto">在编辑 零件</span>
        <button className="ml-[170px] flex items-center gap-[30px]">
          MMGS
          <svg viewBox="0 0 8 6" className="h-[6px] w-[8px]" aria-hidden="true"><path d="M0 5.500h8L4 .5z" fill="#444" /></svg>
        </button>
        <button aria-label="标签" className="mr-[3px] mb-[3px] ml-[37px]">
          <svg viewBox="0 0 24 20" className="h-[20px] w-[24px]" fill="#ddd" stroke="#555" strokeWidth="1.600" strokeLinejoin="round" aria-hidden="true">
            <path d="M1 3l10-2 12 9-7 9L3 11z" /><circle cx="8" cy="6" r="2" fill="#fff" /><path d="M13 10l4-3M1 3v6l14 10" />
          </svg>
        </button>
      </footer>
    </div>
  );
}
